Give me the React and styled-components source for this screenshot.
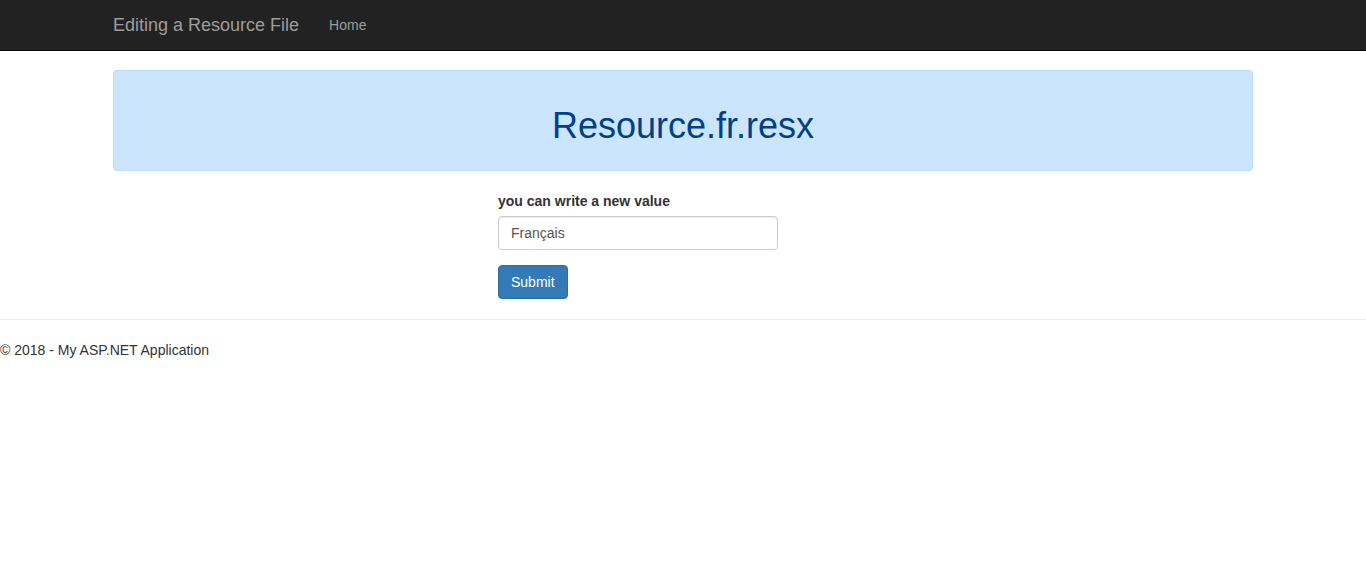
import React from "react";
import styled, { createGlobalStyle } from "styled-components";

const Global = createGlobalStyle`
  html, body { margin: 0; padding: 0; background: #fff; }
  body {
    font-family: "Liberation Sans", Arial, Helvetica, sans-serif;
    font-size: 14px;
    line-height: 1.42857143;
    color: #333;
  }
  * { box-sizing: border-box; }
`;

const Navbar = styled.nav`
  height: 51px;
  background: #222;
  border-bottom: 1px solid #080808;
`;

const NavContainer = styled.div`
  width: 1170px;
  margin: 0 auto;
  padding: 0 15px;
  display: flex;
  align-items: center;
  height: 50px;
`;

const Brand = styled.a`
  font-size: 18px;
  line-height: 20px;
  color: #9d9d9d;
  text-decoration: none;
  padding: 15px 15px 15px 0;
`;

const NavLink = styled.a`
  font-size: 14px;
  line-height: 20px;
  color: #9d9d9d;
  text-decoration: none;
  padding: 15px;
`;

const Container = styled.div`
  width: 1170px;
  margin: 0 auto;
  padding: 19px 15px 0;
`;

const Alert = styled.div`
  background: #cce5ff;
  border: 1px solid #b8daff;
  border-radius: 4px;
  padding: 15px;
  color: #004085;
  text-align: center;
`;

const Title = styled.h1`
  margin: 20px 0 10px;
  font-size: 36px;
  font-weight: 500;
  line-height: 39px;
`;

const Form = styled.form`
  margin: 20px 0 0 385px;
  width: 280px;
`;

const FormGroup = styled.div`
  margin-bottom: 15px;
`;

const Label = styled.label`
  display: block;
  font-weight: bold;
  margin-bottom: 5px;
  color: #333;
`;

const Input = styled.input`
  display: block;
  width: 280px;
  height: 34px;
  padding: 6px 12px;
  font-family: inherit;
  font-size: 14px;
  color: #555;
  border: 1px solid #ccc;
  border-radius: 4px;
  box-shadow: inset 0 1px 1px rgba(0, 0, 0, 0.075);
  outline: none;
`;

const Button = styled.button`
  display: inline-block;
  height: 34px;
  padding: 6px 12px;
  font-family: inherit;
  font-size: 14px;
  line-height: 20px;
  color: #fff;
  background: #337ab7;
  border: 1px solid #2e6da4;
  border-radius: 4px;
`;

const Rule = styled.hr`
  margin: 20px 0;
  border: 0;
  border-top: 1px solid #eee;
`;

const Footer = styled.footer`
  p { margin: 0; line-height: 20px; }
`;

export default function App() {
  return (
    <>
      <Global />
      <Navbar>
        <NavContainer>
          <Brand href="#">Editing a Resource File</Brand>
          <NavLink href="#">Home</NavLink>
        </NavContainer>
      </Navbar>
      <Container>
        <Alert>
          <Title>Resource.fr.resx</Title>
        </Alert>
        <Form onSubmit={(e) => e.preventDefault()}>
          <FormGroup>
            <Label>you can write a new value</Label>
            <Input defaultValue="Français" />
          </FormGroup>
          <Button type="submit">Submit</Button>
        </Form>
      </Container>
      <Rule />
      <Footer>
        <p>© 2018 - My ASP.NET Application</p>
      </Footer>
    </>
  );
}
